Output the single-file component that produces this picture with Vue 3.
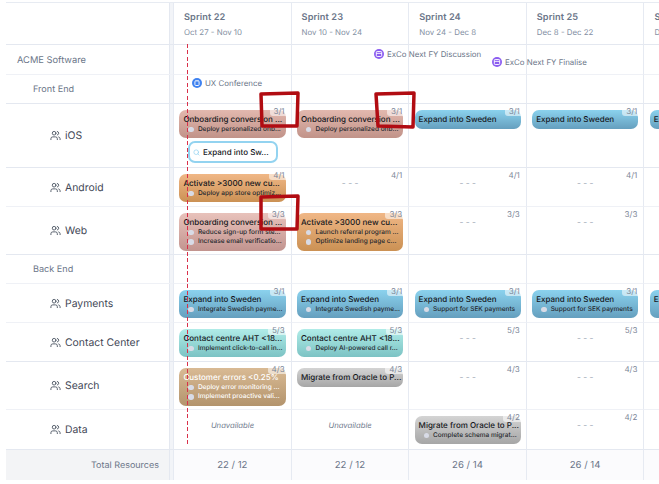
<script setup>
const sprints = [
  ['Sprint 22', 'Oct 27 - Nov 10'],
  ['Sprint 23', 'Nov 10 - Nov 24'],
  ['Sprint 24', 'Nov 24 - Dec 8'],
  ['Sprint 25', 'Dec 8 - Dec 22'],
  ['Sprint 26', 'Dec 22 - Jan 5'],
]
const c = (title, tone, items = []) => ({ title, tone, items })
const on = 'Onboarding conversion ...'
const act = 'Activate >3000 new cu...'
const swe = 'Expand into Sweden'
const rows = [
  { kind: 'org', label: 'ACME Software', soft: true },
  { kind: 'group', label: 'Front End' },
  { kind: 'team', label: 'iOS', load: '3/1', soft: false, cells: [
    [c(on, 'salmon', ['Deploy personalized onb...']), { outline: 'Expand into Sw...' }],
    [c(on, 'salmon', ['Deploy personalized onb...'])],
    [c(swe, 'blue')], [c(swe, 'blue')], [c(swe, 'blue')],
  ] },
  { kind: 'team', label: 'Android', load: '4/1', soft: true, cells: [
    [c(act, 'orange', ['Deploy app store optimiz...'])], [], [], [], [],
  ] },
  { kind: 'team', label: 'Web', load: '3/3', cells: [
    [c(on, 'rose', ['Reduce sign-up form ste...', 'Increase email verificatio...'])],
    [c(act, 'orange', ['Launch referral program ...', 'Optimize landing page c...'])],
    [], [], [],
  ] },
  { kind: 'group', label: 'Back End', soft: true },
  { kind: 'team', label: 'Payments', load: '3/1', soft: true, cells: [
    [c(swe, 'blue', ['Integrate Swedish payme...'])],
    [c(swe, 'blue', ['Integrate Swedish payme...'])],
    [c(swe, 'blue', ['Support for SEK payments'])],
    [c(swe, 'blue', ['Support for SEK payments'])],
    [c(swe, 'blue', ['Support for SEK payments'])],
  ] },
  { kind: 'team', label: 'Contact Center', load: '5/3', cells: [
    [c('Contact centre AHT <18...', 'teal', ['Implement click-to-call in...'])],
    [c('Contact centre AHT <18...', 'teal', ['Deploy AI-powered call r...'])],
    [], [], [],
  ] },
  { kind: 'team', label: 'Search', load: '4/3', soft: true, cells: [
    [c('Customer errors <0.25%', 'tan', ['Deploy error monitoring ...', 'Implement proactive vali...'])],
    [c('Migrate from Oracle to P...', 'gray')],
    [], [], [],
  ] },
  { kind: 'team', label: 'Data', load: '4/2', cells: [
    [{ unavailable: true }], [{ unavailable: true }],
    [c('Migrate from Oracle to P...', 'gray', ['Complete schema migrat...'])],
    [], [],
  ] },
]
const totals = ['22 / 12', '22 / 12', '26 / 14', '26 / 14', '26 / 14']
const marks = [
  { id: 1, d: 'M261 94 L298 93 L297 126 L262 126 Z' },
  { id: 2, d: 'M376 94 L414 93 L413 127 L378 126 Z' },
  { id: 3, d: 'M261 197 L298 196 L297 229 L261 229 Z' },
]
</script>

<template>
  <div class="board">
    <div class="grid">
      <div class="label head-label"></div>
      <div v-for="s in sprints" :key="s[0]" class="cell head-cell">
        <div class="sprint">{{ s[0] }}</div>
        <div class="dates">{{ s[1] }}</div>
      </div>

      <template v-for="r in rows" :key="r.label">
        <div class="label" :class="[r.kind, { soft: r.soft }]">
          <svg v-if="r.kind === 'team'" class="users" viewBox="0 0 24 24" fill="none" stroke="currentColor" stroke-width="2" stroke-linecap="round" stroke-linejoin="round">
            <path d="M16 21v-2a4 4 0 0 0-4-4H6a4 4 0 0 0-4 4v2" />
            <circle cx="9" cy="7" r="4" />
            <path d="M22 21v-2a4 4 0 0 0-3-3.87" />
            <path d="M16 3.13a4 4 0 0 1 0 7.75" />
          </svg>
          <span>{{ r.label }}</span>
        </div>
        <div v-for="(s, i) in sprints" :key="s[0]" class="cell" :class="{ soft: r.soft }">
          <template v-if="r.cells">
            <span v-if="!(r.cells[i][0] && r.cells[i][0].unavailable)" class="load" :class="{ plate: r.cells[i].length }">{{ r.load }}</span>
            <div v-if="!r.cells[i].length" class="none">- - -</div>
            <template v-for="(item, n) in r.cells[i]" :key="n">
              <div v-if="item.unavailable" class="unavailable">Unavailable</div>
              <div v-else-if="item.outline" class="outline">
                <svg class="search" viewBox="0 0 24 24" fill="none" stroke="currentColor" stroke-width="2.4" stroke-linecap="round">
                  <circle cx="11" cy="11" r="8" />
                  <path d="m21 21-4.3-4.3" />
                </svg>
                <span>{{ item.outline }}</span>
              </div>
              <div v-else class="card" :class="item.tone">
                <div class="title">{{ item.title }}</div>
                <div v-for="t in item.items" :key="t" class="item">
                  <i class="dot"></i><span>{{ t }}</span>
                </div>
              </div>
            </template>
          </template>
        </div>
      </template>

      <div class="label total-label">Total Resources</div>
      <div v-for="(t, i) in totals" :key="i" class="cell total">{{ t }}</div>
    </div>

    <div class="today"></div>

    <div class="event ux">
      <span class="ev-icon blue-ev">
        <svg viewBox="0 0 12 12" fill="none" stroke="#fff" stroke-width="1.1"><rect x="3.5" y="3.5" width="5" height="5.5" rx="1" /><path d="M4.8 3.5V2.6M7.2 3.5V2.6" /></svg>
      </span><span class="ev-text">UX Conference</span>
    </div>
    <div class="event fy1">
      <span class="ev-icon purple-ev">
        <svg viewBox="0 0 12 12" fill="none" stroke="#fff" stroke-width="1.1"><rect x="2.8" y="3" width="6.4" height="6" rx="1" /><path d="M2.8 5.2h6.4" /></svg>
      </span><span class="ev-text">ExCo Next FY Discussion</span>
    </div>
    <div class="event fy2">
      <span class="ev-icon purple-ev">
        <svg viewBox="0 0 12 12" fill="none" stroke="#fff" stroke-width="1.1"><rect x="2.8" y="3" width="6.4" height="6" rx="1" /><path d="M2.8 5.2h6.4" /></svg>
      </span><span class="ev-text">ExCo Next FY Finalise</span>
    </div>

    <svg class="marks" viewBox="0 0 659 484" fill="none" stroke="#b10c12" stroke-width="3.5" stroke-linejoin="round">
      <path v-for="m in marks" :key="m.id" :d="m.d" />
    </svg>
  </div>
</template>

<style>
body { background: #fff; }
</style>

<style scoped>
.board {
  position: relative;
  width: 659px;
  height: 484px;
  overflow: hidden;
  background: #fff;
  font-family: Inter, "Liberation Sans", sans-serif;
  text-rendering: geometricPrecision;
}
.grid {
  display: grid;
  margin: 2px 0 0 6px;
  grid-template-columns: 168px repeat(5, 117.6px);
  grid-template-rows: 42px 30px 29px 64px 39px 48px 29px 39px 39px 48px 40px 30px;
  border-top: 1px solid #e7ebf2;
  width: max-content;
}
.label {
  display: flex;
  align-items: center;
  box-sizing: border-box;
  border-bottom: 1px solid #e4e8f0;
  border-right: 1px solid #e6eaf2;
  color: #6b7689;
  box-shadow: inset -3px 0 0 #f2f4f8, inset -4px 0 0 #e4e8f0;
}
.label.soft, .cell.soft { border-bottom-color: #eff1f6; }
.org { padding: 1px 0 0 11px; font-size: 9.3px; }
.group { padding: 1px 0 0 27px; font-size: 9.1px; }
.team { padding-left: 44px; font-size: 10.4px; color: #3f4756; gap: 4px; }
.users { width: 11px; height: 11px; color: #4b5563; flex: none; }
.cell {
  position: relative;
  box-sizing: border-box;
  padding: 6px 5px 0 5.4px;
  border-bottom: 1px solid #e4e8f0;
  border-right: 1px solid #e6eaf2;
  min-width: 0;
}
.head-cell { padding: 8px 0 0 10px; }
.sprint { font-size: 9.2px; font-weight: 600; color: #6b7689; line-height: 13px; letter-spacing: 0.1px; }
.dates { font-size: 7.9px; color: #8490a3; line-height: 11px; margin-top: 3px; }
.load {
  position: absolute;
  top: 2px;
  right: 5px;
  padding: 0 1px 0 4px;
  font-size: 8px;
  line-height: 10px;
  color: #7a8496;
  z-index: 1;
}
.plate { background: rgba(255, 255, 255, 0.55); border-radius: 0 0 0 3px; }
.none {
  text-align: center;
  padding-top: 4px;
  font-size: 8.5px;
  line-height: 12px;
  color: #a3abb8;
}
.unavailable {
  text-align: center;
  padding-top: 4px;
  font-size: 7.7px;
  line-height: 12px;
  font-style: italic;
  color: #6f7a8d;
}
.card {
  box-sizing: border-box;
  border-radius: 7px;
  padding: 2.5px 5px 4px 4px;
  min-height: 18px;
  color: #15171c;
  white-space: nowrap;
  overflow: hidden;
}
.title { font-size: 8px; font-weight: 500; line-height: 12px; }
.item {
  display: flex;
  align-items: center;
  font-size: 6.5px;
  font-weight: 500;
  line-height: 9.5px;
  padding-left: 5px;
  color: #24272d;
}
.dot {
  flex: none;
  width: 5.5px;
  height: 5.5px;
  margin-right: 4px;
  border-radius: 50%;
  background: #d8dbe6;
}
.salmon { background: linear-gradient(#e2b8ae, #c19389); }
.rose { background: linear-gradient(#e8c2bb, #c2948f); }
.blue { background: linear-gradient(#8bd2ee, #659fbe); }
.orange { background: linear-gradient(#f0b786, #cb9154); }
.teal { background: linear-gradient(#b0ece8, #7cc3c4); }
.tan { background: linear-gradient(#d9ba94, #b3946d); color: #fff; }
.tan .item { color: #fff; }
.gray { background: linear-gradient(#d4d4d4, #a6a6a6); }
.outline {
  box-sizing: border-box;
  display: flex;
  align-items: center;
  width: 90px;
  height: 22px;
  margin: 3px 0 0 8.6px;
  padding-left: 3.5px;
  border: 2px solid #93d3f0;
  border-radius: 7px;
  background: #fff;
  font-size: 8px;
  font-weight: 500;
  color: #15171c;
  white-space: nowrap;
}
.search { width: 7px; height: 7px; margin-right: 2.5px; color: #93d3f0; flex: none; }
.total-label {
  justify-content: flex-end;
  padding-right: 14px;
  background: #f3f4f6;
  font-size: 9px;
  border-bottom: none;
}
.total {
  display: flex;
  align-items: center;
  justify-content: center;
  padding: 0;
  background: #fbfbfd;
  font-size: 9.6px;
  color: #6b7689;
  border-bottom: none;
}
.today {
  position: absolute;
  left: 187px;
  top: 44px;
  width: 1px;
  height: 403px;
  background: repeating-linear-gradient(#d9304a 0 4px, transparent 4px 6.5px);
  z-index: 2;
}
.event {
  position: absolute;
  display: flex;
  align-items: center;
  gap: 3px;
  font-size: 7.9px;
  line-height: 11px;
  color: #6b7689;
  white-space: nowrap;
  z-index: 2;
}
.ev-text { margin-top: 1px; }
.ev-icon { display: block; width: 10px; height: 10px; border-radius: 50%; }
.ev-icon svg { display: block; width: 10px; height: 10px; }
.blue-ev { background: #3f82f0; }
.purple-ev { background: #8b5cf0; }
.ux { left: 192px; top: 77px; }
.fy1 { left: 374px; top: 48px; }
.fy2 { left: 492px; top: 56px; }
.marks {
  position: absolute;
  inset: 0;
  width: 659px;
  height: 484px;
  z-index: 3;
  pointer-events: none;
}
</style>
